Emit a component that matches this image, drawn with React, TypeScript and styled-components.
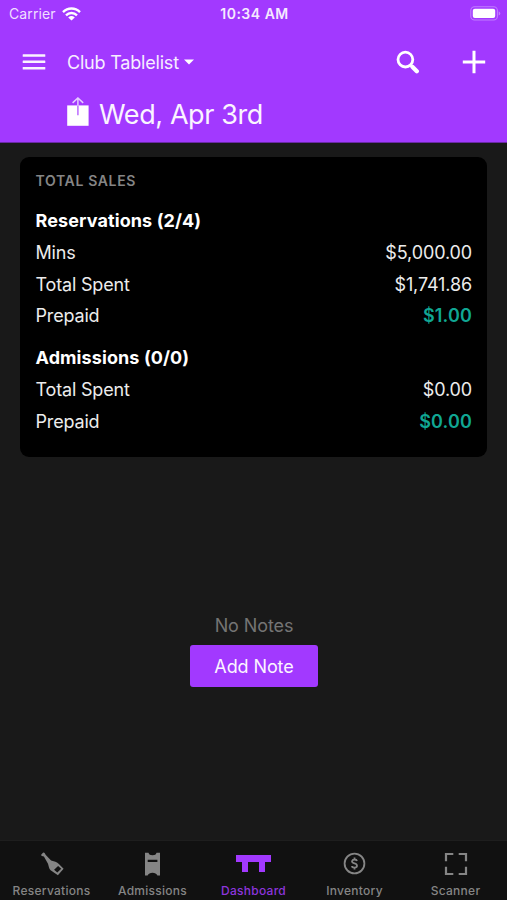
import React from "react";
import styled, { createGlobalStyle } from "styled-components";

const purple = "#a239ff";

const GlobalStyle = createGlobalStyle`
  *, *::before, *::after { box-sizing: border-box; }
  body { margin: 0; background: #191919; font-family: Inter, "Liberation Sans", sans-serif; }
  button { font: inherit; color: inherit; border: 0; padding: 0; margin: 0; background: none; letter-spacing: inherit; }
  svg { display: block; flex: none; }
`;

const Screen = styled.div`
  width: 507px;
  height: 900px;
  display: flex;
  flex-direction: column;
  overflow: hidden;
  background: #191919;
  color: #fff;
`;

const Header = styled.header`
  height: 143px;
  flex: none;
  background: ${purple};
  border-bottom: 1px solid #6a2aa5;
`;

const StatusBar = styled.div`
  height: 27px;
  display: grid;
  grid-template-columns: 1fr auto 1fr;
  align-items: center;
  padding: 0 6px 0 9px;
  font-size: 14px;
  line-height: 27px;
`;

const Carrier = styled.div`
  display: flex;
  align-items: center;
  gap: 6px;
  color: #f0dfff;
  letter-spacing: 0.1px;
`;

const Clock = styled.div`
  font-weight: 600;
  font-size: 14px;
  letter-spacing: 0.5px;
  color: #f5e9ff;
  margin-right: 1px;
`;

const BatterySlot = styled.div`
  justify-self: end;
`;

const NavBar = styled.div`
  height: 70px;
  display: flex;
  align-items: center;
  padding: 0 21px 0 22px;
`;

const VenueButton = styled.button`
  display: flex;
  align-items: center;
  gap: 5px;
  margin-left: 21px;
  font-size: 18px;
  letter-spacing: -0.2px;
  color: #f7edff;
`;

const NavActions = styled.div`
  margin-left: auto;
  display: flex;
  align-items: center;
  gap: 42px;
`;

const DateRow = styled.div`
  display: flex;
  align-items: flex-start;
  height: 36px;
  padding-left: 66px;
  gap: 10px;
`;

const DateText = styled.h1`
  margin: 0;
  font-size: 27px;
  font-weight: 400;
  line-height: 36px;
  letter-spacing: -0.4px;
  color: #faf4ff;
`;

const Main = styled.main`
  flex: 1;
  min-height: 0;
  padding: 14px 20px 0;
  display: flex;
  flex-direction: column;
`;

const Card = styled.section`
  height: 299.5px;
  flex: none;
  background: #000;
  border-radius: 9px;
  padding: 14px 15px 0 15.5px;
`;

const CardTitle = styled.h2`
  margin: 0 0 14px;
  font-size: 14px;
  line-height: 20px;
  font-weight: 600;
  letter-spacing: 0.65px;
  color: #858585;
`;

const Group = styled.div`
  & + & { margin-top: 10px; }
`;

const GroupTitle = styled.h3`
  margin: 0;
  font-size: 18px;
  font-weight: 700;
  line-height: 31.75px;
  letter-spacing: 0.1px;
`;

const Row = styled.div`
  display: flex;
  justify-content: space-between;
  font-size: 18px;
  line-height: 31.75px;
  color: #ececec;
  letter-spacing: -0.17px;
`;

const Amount = styled.span<{ $paid?: boolean }>`
  color: ${(p) => (p.$paid ? "#10a793" : "#ececec")};
  font-weight: ${(p) => (p.$paid ? 600 : 400)};
  letter-spacing: ${(p) => (p.$paid ? "0.15px" : "-0.12px")};
`;

const Notes = styled.section`
  display: flex;
  flex-direction: column;
  align-items: center;
  margin: 157.5px 0 0 1px;
`;

const EmptyText = styled.p`
  margin: 0 0 7px;
  font-size: 18px;
  line-height: 24px;
  letter-spacing: -0.1px;
  color: #747474;
`;

const AddButton = styled.button`
  width: 128px;
  height: 42px;
  border-radius: 3px;
  background: ${purple};
  color: #fbf4ff;
  font-size: 18px;
  letter-spacing: -0.1px;
`;

const TabBar = styled.nav`
  height: 60px;
  flex: none;
  display: grid;
  grid-template-columns: repeat(5, 101px);
  justify-content: center;
  background: #111;
  border-top: 1px solid #1e1e1e;
`;

const Tab = styled.button<{ $active?: boolean }>`
  display: flex;
  flex-direction: column;
  align-items: center;
  color: ${(p) => (p.$active ? purple : "#858585")};
`;

const TabIcon = styled.span`
  height: 42px;
  display: flex;
  align-items: center;
  padding-top: 3px;
`;

const TabLabel = styled.span<{ $active?: boolean }>`
  font-size: 12px;
  line-height: 16px;
  font-weight: 500;
  letter-spacing: 0.27px;
  color: ${(p) => (p.$active ? "#8d35dc" : "#858585")};
`;

const WifiIcon = () => (
  <svg width="19" height="14" viewBox="0 0 19 14" fill="none" stroke="#fff" strokeWidth="2.4">
    <path d="M1 5.1C5.8.3 13.2.3 18 5.1" />
    <path d="M4 8.3C7.1 5.3 11.9 5.3 15 8.3" />
    <path d="M9.5 13.6 6.2 10.4Q9.5 7.8 12.8 10.4Z" fill="#fff" stroke="none" />
  </svg>
);

const BatteryIcon = () => (
  <svg width="31" height="15" viewBox="0 0 31 15">
    <rect x="0.8" y="0.8" width="26.6" height="13.2" rx="3.8" fill="none" stroke="#c07dff" strokeWidth="1.1" />
    <rect x="2.8" y="2.8" width="22.4" height="9.2" rx="2" fill="#fff" />
    <path d="M28.7 5.2Q30.3 6 30.3 7.4T28.7 9.6Z" fill="#c07dff" />
  </svg>
);

const MenuIcon = () => (
  <svg width="24" height="16" viewBox="0 0 24 16" fill="#faf2ff">
    <rect x="0.7" y="0.3" width="22.6" height="2.5" rx="0.5" />
    <rect x="0.7" y="6.6" width="22.6" height="2.5" rx="0.5" />
    <rect x="0.7" y="12.9" width="22.6" height="2.5" rx="0.5" />
  </svg>
);

const CaretIcon = () => (
  <svg width="10" height="6" viewBox="0 0 10 6" fill="#fff">
    <path d="M0 .4h10L5 5.6Z" />
  </svg>
);

const SearchIcon = () => (
  <svg width="24" height="24" viewBox="0 0 24 24" fill="none" stroke="#fff">
    <circle cx="9.4" cy="9.6" r="7.4" strokeWidth="2.8" />
    <path d="m14.8 15.2 1.8 1.8" strokeWidth="3" />
    <path d="m16.6 17 4.2 4.2" strokeWidth="4.3" strokeLinecap="round" />
  </svg>
);

const PlusIcon = () => (
  <svg width="24" height="24" viewBox="0 0 24 24" stroke="#fff" strokeWidth="3">
    <path d="M12 .8v22.4M.8 12h22.4" />
  </svg>
);

const ShareIcon = () => (
  <svg width="23" height="30" viewBox="0 0 23 30">
    <path d="M1.2 8.4h21.4V28.8H1.2Z" fill="#fff" />
    <path d="M11.9 8.4v9.8" stroke="#bf74ff" strokeWidth="1.6" />
    <path d="M11.9 8.4V1M6.6 5.9 11.9 1l5.3 4.9" fill="none" stroke="#e6ccff" strokeWidth="1.5" />
  </svg>
);

const BottleIcon = () => (
  <svg width="24" height="24" viewBox="0 0 24 24" fill="currentColor">
    <path
      fillRule="evenodd"
      d="M1.3 2.6 3 .8Q3.9.1 4.6 1L5.8 3 11.1 8.4 15.4 9.8Q17.6 10.5 18.9 11.9L23.6 16.8 17.9 23.3 10.6 18.2Q9.4 17.3 9 15.6L8 11.7 3.9 4.5 1.9 3.9Q.7 3.4 1.3 2.6ZM18.1 13.9 14.1 17.8 17.3 20.6 21.2 16.7Z"
    />
  </svg>
);

const TicketIcon = () => (
  <svg width="17" height="24" viewBox="0 0 17 24" fill="currentColor">
    <path
      fillRule="evenodd"
      d="M1 .7h3.5Q5 3.2 8.5 3.2T12.5.7H16v22.8h-2.6Q12 20.7 8.5 20.7T3.6 23.5H1Zm2.7 7v2.3h9.7V7.7Z"
    />
  </svg>
);

const TablesIcon = () => (
  <svg width="35" height="17" viewBox="0 0 35 17" fill="currentColor">
    <path d="M0 0h35v7h-6v10h-6V7H12v10H6V7H0Z" />
  </svg>
);

const DollarIcon = () => (
  <svg width="23" height="23" viewBox="0 0 23 23" fill="none" stroke="currentColor">
    <circle cx="11.5" cy="11.5" r="9.9" strokeWidth="1.8" />
    <path
      d="M11.5 5.5v2M11.5 15.5v2M14 9Q13.6 7.5 11.5 7.5T9 9.3q0 1.5 2.5 2.1T14 13.8q0 1.8-2.5 1.8T9 14"
      strokeWidth="1.8"
    />
  </svg>
);

const ScanIcon = () => (
  <svg width="24" height="24" viewBox="0 0 24 24" fill="none" stroke="currentColor" strokeWidth="2.2">
    <path d="M9.3 2H2v7.3M14.7 2H22v7.3M22 14.7V22h-7.3M9.3 22H2v-7.3" />
  </svg>
);

const groups = [
  {
    title: "Reservations (2/4)",
    rows: [
      { label: "Mins", value: "$5,000.00" },
      { label: "Total Spent", value: "$1,741.86" },
      { label: "Prepaid", value: "$1.00", paid: true },
    ],
  },
  {
    title: "Admissions (0/0)",
    rows: [
      { label: "Total Spent", value: "$0.00" },
      { label: "Prepaid", value: "$0.00", paid: true },
    ],
  },
];

const tabs = [
  { label: "Reservations", Icon: BottleIcon },
  { label: "Admissions", Icon: TicketIcon },
  { label: "Dashboard", Icon: TablesIcon, active: true },
  { label: "Inventory", Icon: DollarIcon },
  { label: "Scanner", Icon: ScanIcon },
];

export default function App() {
  return (
    <Screen>
      <GlobalStyle />
      <Header>
        <StatusBar>
          <Carrier>
            Carrier
            <WifiIcon />
          </Carrier>
          <Clock>10:34 AM</Clock>
          <BatterySlot>
            <BatteryIcon />
          </BatterySlot>
        </StatusBar>
        <NavBar>
          <button aria-label="Menu">
            <MenuIcon />
          </button>
          <VenueButton>
            Club Tablelist
            <CaretIcon />
          </VenueButton>
          <NavActions>
            <button aria-label="Search">
              <SearchIcon />
            </button>
            <button aria-label="Add">
              <PlusIcon />
            </button>
          </NavActions>
        </NavBar>
        <DateRow>
          <ShareIcon />
          <DateText>Wed, Apr 3rd</DateText>
        </DateRow>
      </Header>
      <Main>
        <Card>
          <CardTitle>TOTAL SALES</CardTitle>
          {groups.map((group) => (
            <Group key={group.title}>
              <GroupTitle>{group.title}</GroupTitle>
              {group.rows.map((row) => (
                <Row key={row.label}>
                  <span>{row.label}</span>
                  <Amount $paid={row.paid}>{row.value}</Amount>
                </Row>
              ))}
            </Group>
          ))}
        </Card>
        <Notes>
          <EmptyText>No Notes</EmptyText>
          <AddButton>Add Note</AddButton>
        </Notes>
      </Main>
      <TabBar>
        {tabs.map(({ label, Icon, active }) => (
          <Tab key={label} $active={active}>
            <TabIcon>
              <Icon />
            </TabIcon>
            <TabLabel $active={active}>{label}</TabLabel>
          </Tab>
        ))}
      </TabBar>
    </Screen>
  );
}
